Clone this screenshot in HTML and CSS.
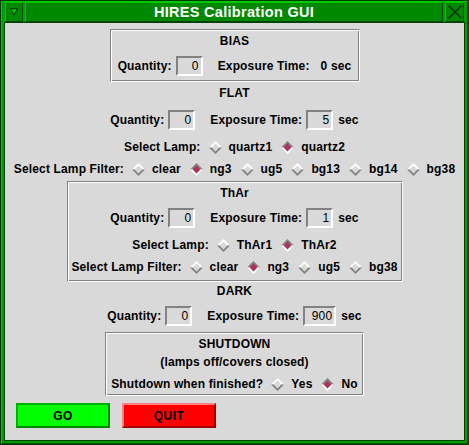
FILE: index.html
```html
<!DOCTYPE html>
<html>
<head>
<meta charset="utf-8">
<link rel="stylesheet" href="styles.css">
</head>
<body>
<div class="window">
  <div class="titlebar">
    <div class="tb-btn tb-menu">
      <svg width="8" height="8" viewBox="0 0 8 8"><polygon points="0.5,0.5 7.5,0.5 4,7.5" fill="#00b800" stroke="#003a00" stroke-width="1"/></svg>
    </div>
    <div class="tb-title">HIRES Calibration GUI</div>
    <div class="tb-btn tb-close">
      <svg width="16" height="16" viewBox="0 0 16 16"><path d="M1.5 1.5 L14.5 14.5 M14.5 1.5 L1.5 14.5" stroke="#003000" stroke-width="1.6" fill="none"/></svg>
    </div>
  </div>
  <div class="content">
    <div class="group g-bias">
      <div class="title">BIAS</div>
      <div class="qrow">
        <span class="lbl">Quantity:</span><span class="entry">0</span>
        <span class="lbl exp">Exposure Time:</span><span class="lbl val">0 sec</span>
      </div>
    </div>

    <div class="title t-flat">FLAT</div>
    <div class="qrow">
      <span class="lbl">Quantity:</span><span class="entry">0</span>
      <span class="lbl exp">Exposure Time:</span><span class="entry">5</span><span class="lbl unit">sec</span>
    </div>
    <div class="rrow first">
      <span class="lbl">Select Lamp:</span>
      <span class="radio"><svg class="ind" viewBox="0 0 13 13"><polygon points="0,6.5 6.5,0 13,6.5" fill="#fff"/><polygon points="0,6.5 6.5,13 13,6.5" fill="#828282"/><polygon points="2.6,6.5 6.5,2.6 10.4,6.5 6.5,10.4" fill="#d9d9d9"/></svg>quartz1</span>
      <span class="radio"><svg class="ind" viewBox="0 0 13 13"><polygon points="0,6.5 6.5,0 13,6.5" fill="#828282"/><polygon points="0,6.5 6.5,13 13,6.5" fill="#fff"/><polygon points="2.6,6.5 6.5,2.6 10.4,6.5 6.5,10.4" fill="#b03060"/></svg>quartz2</span>
    </div>
    <div class="rrow">
      <span class="lbl">Select Lamp Filter:</span>
      <span class="radio"><svg class="ind" viewBox="0 0 13 13"><polygon points="0,6.5 6.5,0 13,6.5" fill="#fff"/><polygon points="0,6.5 6.5,13 13,6.5" fill="#828282"/><polygon points="2.6,6.5 6.5,2.6 10.4,6.5 6.5,10.4" fill="#d9d9d9"/></svg>clear</span>
      <span class="radio"><svg class="ind" viewBox="0 0 13 13"><polygon points="0,6.5 6.5,0 13,6.5" fill="#828282"/><polygon points="0,6.5 6.5,13 13,6.5" fill="#fff"/><polygon points="2.6,6.5 6.5,2.6 10.4,6.5 6.5,10.4" fill="#b03060"/></svg>ng3</span>
      <span class="radio"><svg class="ind" viewBox="0 0 13 13"><polygon points="0,6.5 6.5,0 13,6.5" fill="#fff"/><polygon points="0,6.5 6.5,13 13,6.5" fill="#828282"/><polygon points="2.6,6.5 6.5,2.6 10.4,6.5 6.5,10.4" fill="#d9d9d9"/></svg>ug5</span>
      <span class="radio"><svg class="ind" viewBox="0 0 13 13"><polygon points="0,6.5 6.5,0 13,6.5" fill="#fff"/><polygon points="0,6.5 6.5,13 13,6.5" fill="#828282"/><polygon points="2.6,6.5 6.5,2.6 10.4,6.5 6.5,10.4" fill="#d9d9d9"/></svg>bg13</span>
      <span class="radio"><svg class="ind" viewBox="0 0 13 13"><polygon points="0,6.5 6.5,0 13,6.5" fill="#fff"/><polygon points="0,6.5 6.5,13 13,6.5" fill="#828282"/><polygon points="2.6,6.5 6.5,2.6 10.4,6.5 6.5,10.4" fill="#d9d9d9"/></svg>bg14</span>
      <span class="radio"><svg class="ind" viewBox="0 0 13 13"><polygon points="0,6.5 6.5,0 13,6.5" fill="#fff"/><polygon points="0,6.5 6.5,13 13,6.5" fill="#828282"/><polygon points="2.6,6.5 6.5,2.6 10.4,6.5 6.5,10.4" fill="#d9d9d9"/></svg>bg38</span>
    </div>

    <div class="group g-thar">
      <div class="title">ThAr</div>
      <div class="qrow">
        <span class="lbl">Quantity:</span><span class="entry">0</span>
        <span class="lbl exp">Exposure Time:</span><span class="entry">1</span><span class="lbl unit">sec</span>
      </div>
      <div class="rrow first">
        <span class="lbl">Select Lamp:</span>
        <span class="radio"><svg class="ind" viewBox="0 0 13 13"><polygon points="0,6.5 6.5,0 13,6.5" fill="#fff"/><polygon points="0,6.5 6.5,13 13,6.5" fill="#828282"/><polygon points="2.6,6.5 6.5,2.6 10.4,6.5 6.5,10.4" fill="#d9d9d9"/></svg>ThAr1</span>
        <span class="radio"><svg class="ind" viewBox="0 0 13 13"><polygon points="0,6.5 6.5,0 13,6.5" fill="#828282"/><polygon points="0,6.5 6.5,13 13,6.5" fill="#fff"/><polygon points="2.6,6.5 6.5,2.6 10.4,6.5 6.5,10.4" fill="#b03060"/></svg>ThAr2</span>
      </div>
      <div class="rrow">
        <span class="lbl">Select Lamp Filter:</span>
        <span class="radio"><svg class="ind" viewBox="0 0 13 13"><polygon points="0,6.5 6.5,0 13,6.5" fill="#fff"/><polygon points="0,6.5 6.5,13 13,6.5" fill="#828282"/><polygon points="2.6,6.5 6.5,2.6 10.4,6.5 6.5,10.4" fill="#d9d9d9"/></svg>clear</span>
        <span class="radio"><svg class="ind" viewBox="0 0 13 13"><polygon points="0,6.5 6.5,0 13,6.5" fill="#828282"/><polygon points="0,6.5 6.5,13 13,6.5" fill="#fff"/><polygon points="2.6,6.5 6.5,2.6 10.4,6.5 6.5,10.4" fill="#b03060"/></svg>ng3</span>
        <span class="radio"><svg class="ind" viewBox="0 0 13 13"><polygon points="0,6.5 6.5,0 13,6.5" fill="#fff"/><polygon points="0,6.5 6.5,13 13,6.5" fill="#828282"/><polygon points="2.6,6.5 6.5,2.6 10.4,6.5 6.5,10.4" fill="#d9d9d9"/></svg>ug5</span>
        <span class="radio"><svg class="ind" viewBox="0 0 13 13"><polygon points="0,6.5 6.5,0 13,6.5" fill="#fff"/><polygon points="0,6.5 6.5,13 13,6.5" fill="#828282"/><polygon points="2.6,6.5 6.5,2.6 10.4,6.5 6.5,10.4" fill="#d9d9d9"/></svg>bg38</span>
      </div>
    </div>

    <div class="title t-dark">DARK</div>
    <div class="qrow">
      <span class="lbl">Quantity:</span><span class="entry">0</span>
      <span class="lbl exp">Exposure Time:</span><span class="entry wide">900</span><span class="lbl unit">sec</span>
    </div>

    <div class="group g-shut">
      <div class="title">SHUTDOWN</div>
      <div class="title">(lamps off/covers closed)</div>
      <div class="rrow r-shut">
        <span class="lbl">Shutdown when finished?</span>
        <span class="radio"><svg class="ind" viewBox="0 0 13 13"><polygon points="0,6.5 6.5,0 13,6.5" fill="#fff"/><polygon points="0,6.5 6.5,13 13,6.5" fill="#828282"/><polygon points="2.6,6.5 6.5,2.6 10.4,6.5 6.5,10.4" fill="#d9d9d9"/></svg>Yes</span>
        <span class="radio"><svg class="ind" viewBox="0 0 13 13"><polygon points="0,6.5 6.5,0 13,6.5" fill="#828282"/><polygon points="0,6.5 6.5,13 13,6.5" fill="#fff"/><polygon points="2.6,6.5 6.5,2.6 10.4,6.5 6.5,10.4" fill="#b03060"/></svg>No</span>
      </div>
    </div>

    <div class="buttons">
      <div class="btn go">GO</div>
      <div class="btn quit">QUIT</div>
    </div>
  </div>
</div>
</body>
</html>
```

FILE: styles.css
```css
html, body {
  margin: 0;
  padding: 0;
  background: #009a00;
}
body {
  width: 469px;
  height: 445px;
  overflow: hidden;
  font-family: "Liberation Sans", Arial, sans-serif;
  font-weight: bold;
  font-size: 12px;
  letter-spacing: 0.15px;
  color: #000;
}
.window {
  width: 469px;
  height: 445px;
  box-sizing: border-box;
  background: #009e00;
  border: 1px solid #003a00;
  padding: 1px 4px 4px 4px;
  display: flex;
  flex-direction: column;
  box-shadow: inset 1px 1px 0 #00c800, inset -1px -1px 0 #005000;
}
.titlebar {
  height: 20px;
  margin-bottom: 1px;
  display: flex;
  gap: 1px;
}
.tb-btn, .tb-title {
  box-sizing: border-box;
  background: #008800;
  border: 1px solid;
  border-color: #00c800 #004400 #004400 #00c800;
  display: flex;
  align-items: center;
  justify-content: center;
}
.tb-menu { width: 18px; }
.tb-close { width: 19px; }
.tb-title {
  flex: 1;
  color: #fff;
  font-size: 14.5px;
  letter-spacing: 0.3px;
  margin: 0 1px;
}
.content {
  width: 459px;
  height: 417px;
  background: #d9d9d9;
  box-shadow: 0 0 0 1px #004000;
  display: flex;
  flex-direction: column;
  align-items: center;
  padding-top: 6px;
  box-sizing: border-box;
}
.group {
  box-sizing: border-box;
  border: 1px solid;
  border-color: #828282 #fff #fff #828282;
  box-shadow: inset 1px 1px 0 #fff, inset -1px -1px 0 #828282;
  display: flex;
  flex-direction: column;
  align-items: center;
  padding-top: 2px;
}
.g-bias { width: 250px; height: 53px; }
.g-thar { width: 336px; height: 101px; margin-top: 1px; }
.g-shut { width: 259px; height: 64px; margin-top: 6px; }
.title {
  height: 18px;
  line-height: 18px;
  white-space: nowrap;
}
.t-flat { margin-top: 2px; }
.qrow {
  display: flex;
  align-items: center;
  height: 20px;
  margin-top: 6px;
  white-space: nowrap;
}
.content > .qrow { margin-top: 8px; }
.content > .t-dark + .qrow { margin-top: 6px; }
.entry {
  box-sizing: border-box;
  width: 27px;
  height: 20px;
  border: 2px solid;
  border-color: #828282 #fff #fff #828282;
  margin-left: 4px;
  font-weight: normal;
  text-align: right;
  padding-right: 2px;
  line-height: 16px;
}
.entry.wide { width: 33px; }
.exp { margin-left: 15px; }
.val { margin-left: 11px; }
.unit { margin-left: 5px; }
.rrow {
  display: flex;
  align-items: center;
  height: 22px;
  white-space: nowrap;
}
.rrow.first { margin-top: 6px; }
.r-shut { margin-top: 2px; }
.radio {
  display: flex;
  align-items: center;
  margin-left: 9px;
}
.lbl + .radio { margin-left: 8px; }
.ind {
  width: 13px;
  height: 13px;
  margin-right: 7px;
}
.buttons {
  align-self: flex-start;
  margin-left: 11px;
  margin-top: 7px;
  display: flex;
  gap: 12px;
}
.btn {
  box-sizing: border-box;
  width: 94px;
  height: 25px;
  border: 2px solid;
  display: flex;
  align-items: center;
  justify-content: center;
  font-size: 12px;
  letter-spacing: 0.5px;
}
.go {
  background: #00ff00;
  border-color: #00b000 #008a00 #008a00 #00b000;
}
.quit {
  background: #ff0000;
  border-color: #ff8080 #a00000 #a00000 #ff8080;
}
```
